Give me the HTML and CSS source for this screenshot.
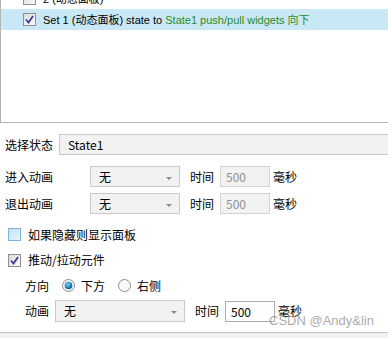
FILE: index.html
```html
<!DOCTYPE html>
<html>
<head>
	<title>interaction</title>
	<link rel="stylesheet" href="styles.css">
</head>
<body>
	<div class="list">
		<div class="rows">
			<div class="row">
				<span class="box"></span>
				<span>2 (动态面板)</span>
			</div>
			<div class="row sel">
				<span class="box on"><svg width="9" height="9" viewBox="0 0 9 9"><path d="M1 4.5 L3.5 7.5 L8 1" fill="none" stroke="#3b3b96" stroke-width="1.8"/></svg></span>
				<span>Set 1 (动态面板) state to <em>State1 push/pull widgets 向下</em></span>
			</div>
		</div>
	</div>

	<div class="form">
		<div class="field state">
			<span class="lbl">选择状态</span>
			<div class="input wide">State1</div>
		</div>
		<div class="field enter">
			<span class="lbl">进入动画</span>
			<div class="select">无<span class="arrow"></span></div>
			<span class="time">时间</span>
			<div class="input num off">500</div>
			<span class="unit">毫秒</span>
		</div>
		<div class="field exit">
			<span class="lbl">退出动画</span>
			<div class="select">无<span class="arrow"></span></div>
			<span class="time">时间</span>
			<div class="input num off">500</div>
			<span class="unit">毫秒</span>
		</div>

		<div class="check first">
			<span class="box hover"></span>
			<span>如果隐藏则显示面板</span>
		</div>
		<div class="check">
			<span class="box on"><svg width="9" height="9" viewBox="0 0 9 9"><path d="M1 4.5 L3.5 7.5 L8 1" fill="none" stroke="#3b3b96" stroke-width="1.8"/></svg></span>
			<span>推动/拉动元件</span>
		</div>

		<div class="sub dir">
			<span class="sublbl">方向</span>
			<svg class="radio" width="13" height="13" viewBox="0 0 13 13">
				<defs>
					<radialGradient id="dot" cx="40%" cy="35%" r="70%">
						<stop offset="0" stop-color="#7fd0f5"/>
						<stop offset="0.6" stop-color="#1f86c2"/>
						<stop offset="1" stop-color="#0d4f7a"/>
					</radialGradient>
				</defs>
				<circle cx="6.5" cy="6.5" r="6" fill="#f4f4f4" stroke="#8c8c8c"/>
				<circle cx="6.5" cy="6.5" r="3.8" fill="url(#dot)"/>
			</svg>
			<span class="opt">下方</span>
			<svg class="radio" width="13" height="13" viewBox="0 0 13 13">
				<circle cx="6.5" cy="6.5" r="6" fill="#fafafa" stroke="#8c8c8c"/>
			</svg>
			<span class="opt">右侧</span>
		</div>
		<div class="sub anim">
			<span class="sublbl">动画</span>
			<div class="select long">无<span class="arrow"></span></div>
			<span class="time">时间</span>
			<div class="input num">500</div>
			<span class="unit">毫秒</span>
		</div>
	</div>

	<div class="footer"></div>
	<div class="mark">CSDN @Andy&amp;lin</div>
</body>
</html>
```
FILE: styles.css
```css
*{
	margin: 0;
	padding: 0;
	box-sizing: border-box;
}

body{
	width: 388px;
	height: 338px;
	overflow: hidden;
	position: relative;
	background-color: #fff;

	font: normal 12px "Noto Sans CJK SC", sans-serif;
	line-height: 16px;
	color: #000;
}

/* event list */
.list{
	height: 123px;
	overflow: hidden;
	border-left: 1px solid #b4b4b4;
	border-bottom: 1px solid #b4b4b4;
}

.rows{
	margin-top: -12px;
}

.row{
	display: flex;
	align-items: center;
	height: 21px;
	padding-left: 22px;
	font: normal 11px "Liberation Sans", "Noto Sans CJK SC", sans-serif;
	line-height: 14px;
}

.row.sel{
	background-color: #c9e8f6;
}

.row .box{
	margin-right: 7px;
}

.row em{
	font-style: normal;
	color: #2b8a2b;
}

.box{
	display: flex;
	align-items: center;
	justify-content: center;
	width: 13px;
	height: 13px;
	flex: none;
	border: 1px solid #8e8f8f;
	background: linear-gradient(135deg, #dcdcdc, #fafafa);
}

.box.hover{
	border-color: #80b2d6;
	background: linear-gradient(135deg, #c2e3f6, #e6f4fc);
}

/* form */
.form{
	padding: 11px 0 0 5px;
}

.field{
	display: flex;
	align-items: center;
	height: 21px;
}

.field.enter{
	margin-top: 11px;
}

.field.exit{
	margin-top: 6px;
}

.field .lbl{
	width: 85px;
	flex: none;
}

.field.state .lbl{
	width: 54px;
}

.input{
	height: 21px;
	padding: 0 8px;
	line-height: 19px;
	border: 1px solid #c9c9c9;
	background-color: #f2f2f2;
}

.input.wide{
	width: 340px;
	flex: none;
}

.input.num{
	width: 50px;
	flex: none;
	padding: 0 5px;
	background-color: #fff;
	border-color: #acacac;
}

.input.num.off{
	background-color: #f2f2f2;
	border-color: #d3d3d3;
	color: #909090;
}

.select{
	position: relative;
	width: 90px;
	height: 21px;
	flex: none;
	padding-left: 8px;
	line-height: 19px;
	border: 1px solid #c9c9c9;
	background-color: #f2f2f2;
}

.select.long{
	width: 130px;
	height: 22px;
	line-height: 20px;
}

.arrow{
	position: absolute;
	right: 7px;
	top: 10px;
	border-left: 3px solid transparent;
	border-right: 3px solid transparent;
	border-top: 3px solid #8a8a8a;
}

.time{
	margin: 0 6px 0 10px;
}

.unit{
	margin-left: 3px;
}

.check{
	display: flex;
	align-items: center;
	height: 26px;
	padding-left: 3px;
}

.check.first{
	margin-top: 8px;
	height: 25px;
}

.check .box{
	margin-right: 7px;
}

.sub{
	display: flex;
	align-items: center;
	padding-left: 20px;
}

.sub.dir{
	height: 25px;
}

.sub.anim{
	height: 22px;
	margin-top: 2px;
}

.sublbl{
	width: 24px;
}

.dir .sublbl{
	margin-right: 13px;
}

.anim .sublbl{
	margin-right: 6px;
}

.radio{
	flex: none;
	margin-right: 6px;
}

.opt{
	margin-right: 13px;
}

.footer{
	margin-top: 10px;
	height: 10px;
	border-top: 1px solid #c3c3c3;
	background-color: #f0f0f0;
}

/* watermark over the form */
.mark{
	position: absolute;
	left: 269px;
	top: 313px;
	font: normal 13px "Liberation Sans", sans-serif;
	line-height: 16px;
	color: rgba(110, 110, 110, 0.6);
}
```
